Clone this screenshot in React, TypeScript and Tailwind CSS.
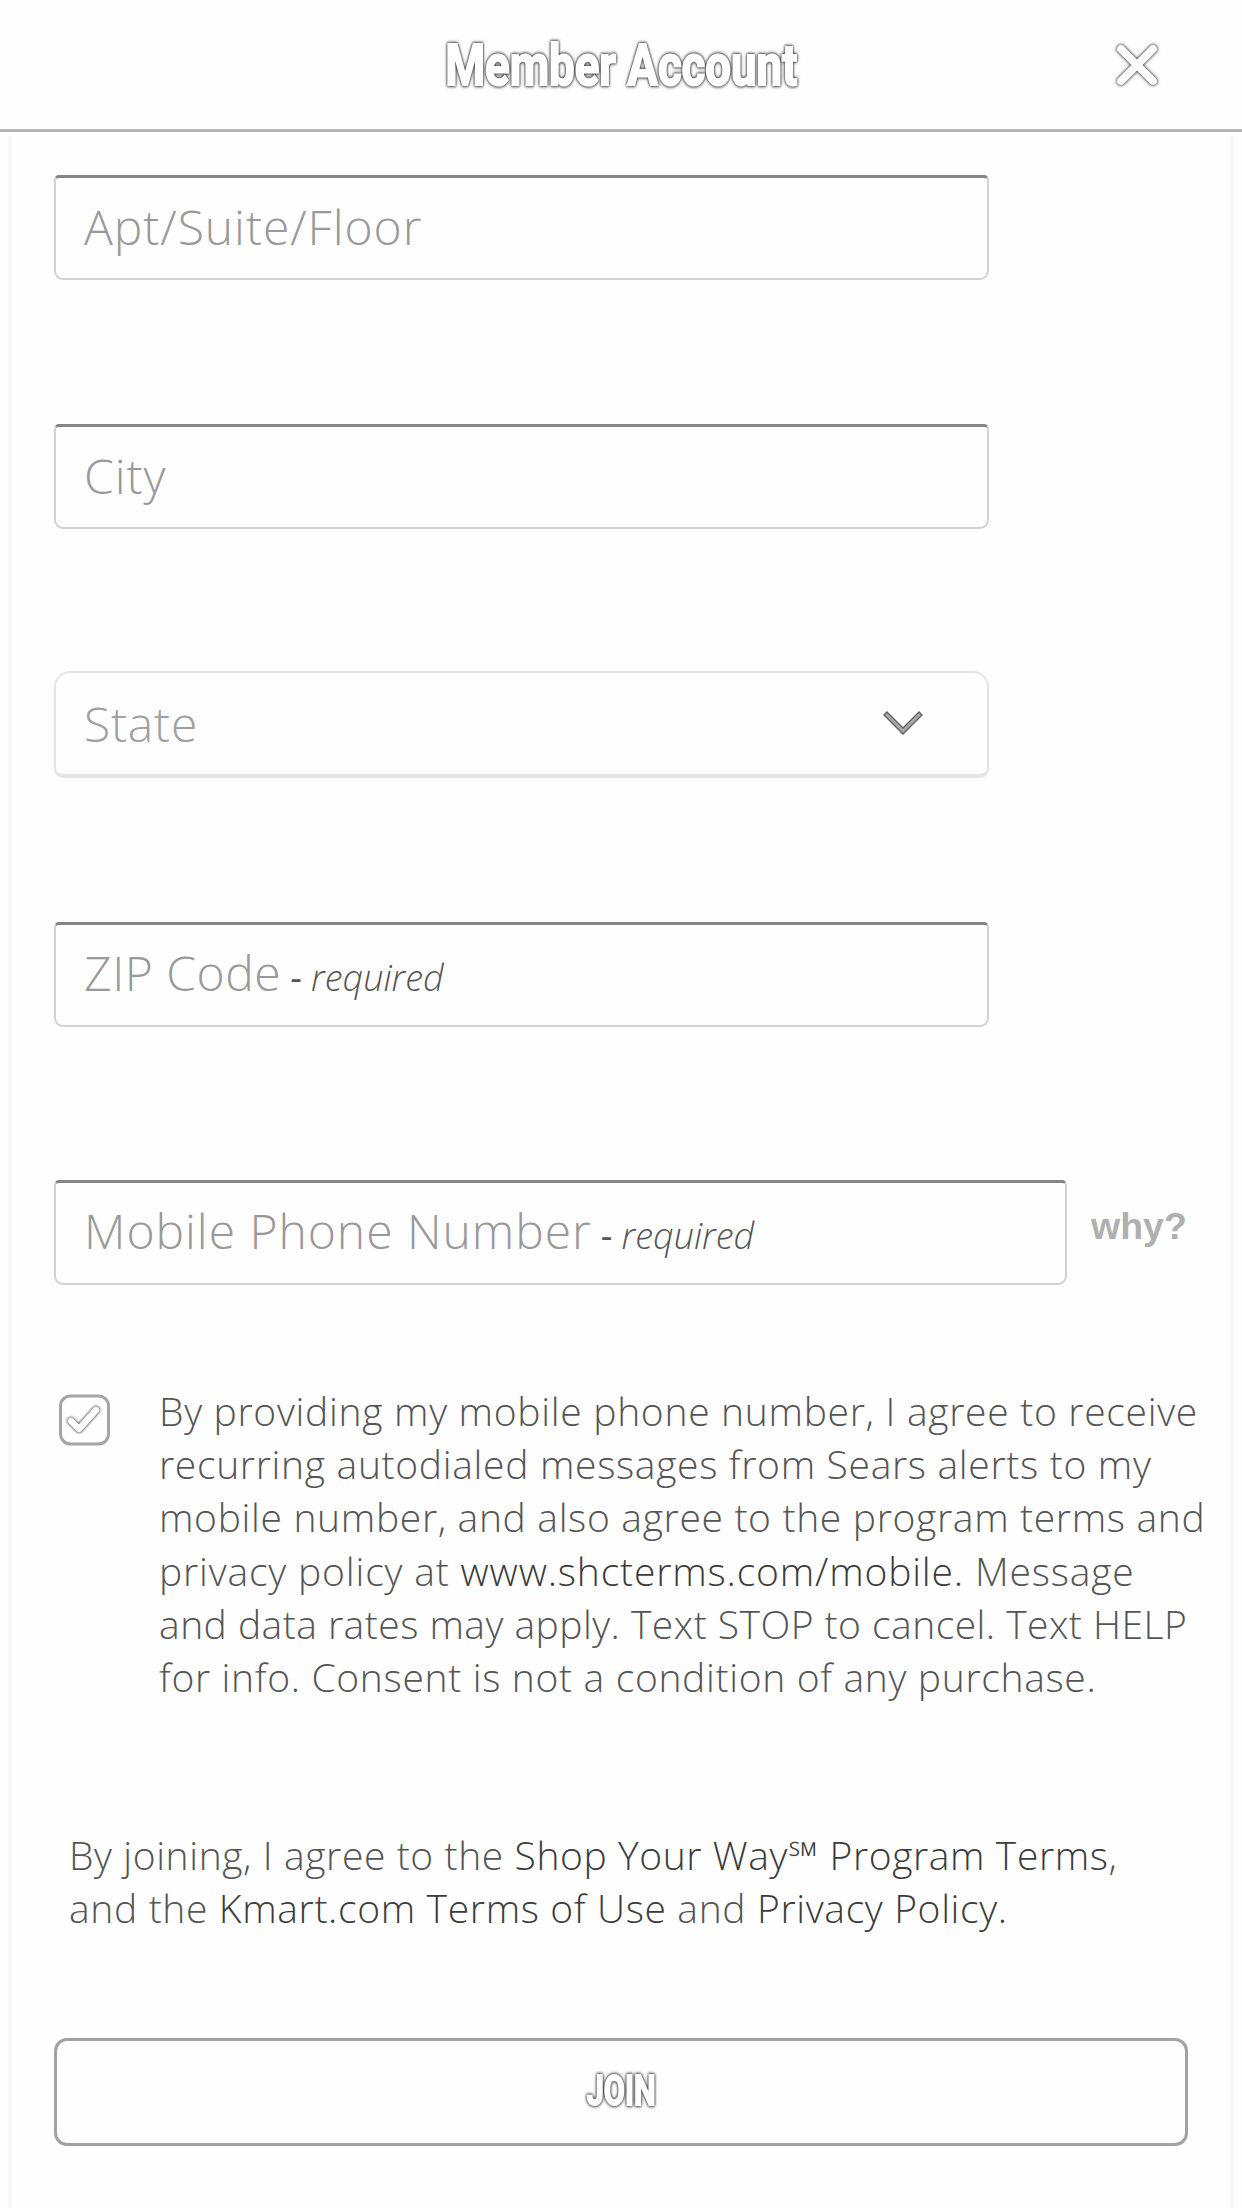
import React from 'react';

const outline =
  "font-['Roboto',sans-serif] [-webkit-text-stroke:2px_#fff] [filter:drop-shadow(0_0_1.5px_#222)_drop-shadow(0_0_1.5px_#777)]";

interface FieldProps {
  label: string;
  required?: boolean;
  className?: string;
  labelClassName?: string;
}

function Field({ label, required, className, labelClassName }: FieldProps) {
  return (
    <div
      className={`flex h-[105px] items-center rounded-t-[5px] rounded-b-[9px] border-2 border-t-[3px] border-[#d2d2d2] border-t-[#858585] pl-[28px] ${required ? '' : 'pb-[3px]'} ${className ?? ''}`}
    >
      <div className="flex items-baseline whitespace-nowrap">
        <span className={`text-[48px] leading-[60px] font-light text-[#999] ${labelClassName ?? 'tracking-[0.96px]'}`}>
          {label}
        </span>
        {required && (
          <span className="ml-[9px] text-[36px] leading-[60px] font-normal text-[#555]">
            - <i className="font-light">required</i>
          </span>
        )}
      </div>
    </div>
  );
}

export default function App() {
  return (
    <div className="flex h-[2208px] w-[1242px] flex-col overflow-hidden bg-[#fefefe] font-['Open_Sans',sans-serif]">
      <header className="grid h-[132px] grid-cols-[1fr_auto_1fr] items-center border-b-[3px] border-[#b5b5b5]">
        <span />
        <h1 className="flex w-[356px] justify-center pt-px">
          <span
            className={`origin-center scale-x-[0.785] text-[58px] leading-[60px] font-bold whitespace-nowrap text-white ${outline}`}
          >
            Member Account
          </span>
        </h1>
        <svg
          className="mr-[77px] h-[56px] w-[56px] justify-self-end [filter:drop-shadow(0_0_1.5px_#333)_drop-shadow(0_0_1px_#999)]"
          viewBox="0 0 56 56"
        >
          <path d="M12 12L44 44M44 12L12 44" stroke="#fff" strokeWidth="8" strokeLinecap="round" />
        </svg>
      </header>

      <main className="mx-[8px] mt-[4px] flex flex-1 flex-col border-x-4 border-[#f7f7f7] pt-[39px] pl-[42px]">
        <Field label="Apt/Suite/Floor" className="w-[935px]" />
        <Field label="City" className="mt-[144px] w-[935px]" />
        <div className="mt-[142px] flex h-[107px] w-[935px] items-center justify-between rounded-[16px] rounded-b-[9px] border-2 border-b-[4px] border-[#e4e4e4] pr-[60px] pl-[28px]">
          <span className="text-[48px] leading-[60px] font-light tracking-[0.8px] text-[#a0a0a0]">State</span>
          <svg className="h-[34px] w-[48px]" viewBox="0 0 48 34">
            <path d="M6 6L24 24L42 6" fill="none" stroke="#606060" strokeWidth="5.500" />
            <path d="M7 7L24 24L41 7" fill="none" stroke="#a8a8a8" strokeWidth="3" />
          </svg>
        </div>
        <Field label="ZIP Code" required className="mt-[144px] w-[935px]" labelClassName="tracking-[0.5px]" />
        <div className="mt-[153px] flex">
          <Field label="Mobile Phone Number" required className="w-[1013px]" />
          <a className="mt-[23px] ml-[24px] font-['Liberation_Sans',sans-serif] text-[37.500px] leading-[46px] font-bold text-[#b0b0b0]">
            why?
          </a>
        </div>

        <label className="mt-[99px] flex">
          <svg className="mt-[9px] ml-[3px] h-[54px] w-[54px] shrink-0" viewBox="0 0 54 54">
            <rect x="3.500" y="3" width="48" height="48" rx="10" fill="#fefefe" stroke="#a5a5a5" strokeWidth="3" />
            <g className="[filter:drop-shadow(0_0_1px_#444)_drop-shadow(0_0_1px_#888)]">
              <path
                d="M14 28L22 36L39 17"
                fill="none"
                stroke="#fff"
                strokeWidth="6.500"
                strokeLinecap="round"
                strokeLinejoin="round"
              />
            </g>
          </svg>
          <div className="ml-[48px] text-[39px] leading-[53.200px] font-light whitespace-nowrap text-[#555]">
            <p className="tracking-[0.7px]">By providing my mobile phone number, I agree to receive</p>
            <p className="tracking-[0.68px]">recurring autodialed messages from Sears alerts to my</p>
            <p className="tracking-[0.67px]">mobile number, and also agree to the program terms and</p>
            <p className="tracking-[0.84px]">
              privacy policy at <span className="text-[#3c3c3c]">www.shcterms.com/mobile.</span> Message
            </p>
            <p className="tracking-[0.47px]">and data rates may apply. Text STOP to cancel. Text HELP</p>
            <p className="tracking-[0.67px]">for info. Consent is not a condition of any purchase.</p>
          </div>
        </label>

        <div className="mt-[125px] ml-[15px] text-[39px] leading-[53.200px] font-light whitespace-nowrap text-[#555]">
          <p className="tracking-[0.6px]">
            By joining, I agree to the <span className="text-[#3c3c3c]">Shop Your Way℠ Program Terms</span>,
          </p>
          <p className="tracking-[0.65px]">
            and the <span className="text-[#3c3c3c]">Kmart.com Terms of Use</span> and{' '}
            <span className="text-[#3c3c3c]">Privacy Policy.</span>
          </p>
        </div>

        <button className="mt-[103px] flex h-[108px] w-[1134px] items-center justify-center rounded-[13px] border-[3px] border-[#a2a2a2] pb-px">
          <span className={`scale-x-[0.73] text-[42px] leading-[50px] font-bold text-white ${outline}`}>JOIN</span>
        </button>
      </main>
    </div>
  );
}
